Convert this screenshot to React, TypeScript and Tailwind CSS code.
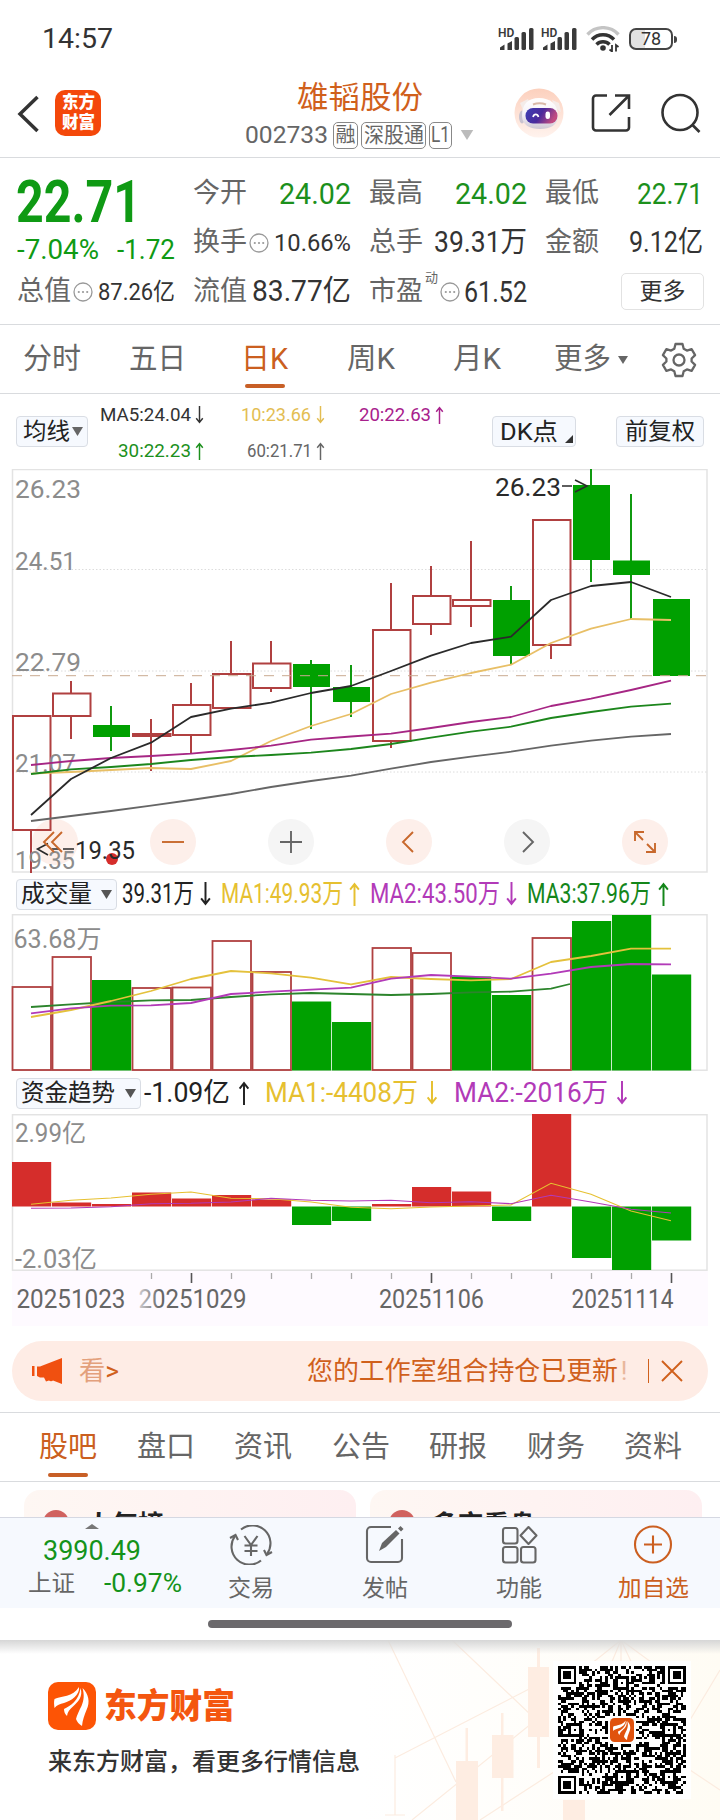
import React, { useLayoutEffect, useRef } from 'react';
import clsx from 'clsx';

const RED = '#b04040';
const SOLID_RED = '#d52d2b';
const GREEN = '#00a000';
const GOLD = '#e6c030';
const PURPLE = '#b23ab8';

interface FitProps {
  w: number;
  className?: string;
  children: React.ReactNode;
}

// Squeezes a single line of text into a fixed width
const Fit: React.FC<FitProps> = ({ w, className, children }) => {
  const ref = useRef<HTMLSpanElement>(null);

  useLayoutEffect(() => {
    const el = ref.current;
    if (!el) return;
    el.style.transform = 'none';
    el.style.transform = `scaleX(${w / el.getBoundingClientRect().width})`;
  }, [w, children]);

  return (
    <span className={clsx('block shrink-0 whitespace-nowrap leading-none', className)} style={{ width: w }}>
      <span ref={ref} className="inline-block origin-left leading-none">{children}</span>
    </span>
  );
};

const Arrow: React.FC<{ up?: boolean; className?: string }> = ({ up, className }) => (
  <svg viewBox="0 0 10 22" fill="none" stroke="currentColor" strokeWidth="1.8" className={clsx('shrink-0', className)}>
    {up ? <path d="M5 22V2M1 7l4-5 4 5" /> : <path d="M5 0v20M1 15l4 5 4-5" />}
  </svg>
);

const Caret: React.FC<{ className?: string }> = ({ className }) => (
  <svg viewBox="0 0 10 8" className={clsx('shrink-0', className)}>
    <path d="M0 0h10L5 8z" fill="currentColor" />
  </svg>
);

const More: React.FC<{ className?: string }> = ({ className }) => (
  <svg viewBox="0 0 20 20" className={clsx('h-5 w-5 shrink-0 text-[#999]', className)}>
    <circle cx="10" cy="10" r="9" fill="none" stroke="currentColor" strokeWidth="1.3" />
    <circle cx="5.8" cy="10" r="1.1" fill="currentColor" />
    <circle cx="10" cy="10" r="1.1" fill="currentColor" />
    <circle cx="14.2" cy="10" r="1.1" fill="currentColor" />
  </svg>
);

const Signal = () => (
  <div className="relative h-[24px] w-[36px]">
    <svg viewBox="0 0 36 24" className="h-full w-full" fill="#3a3a3a">
      <path d="M1 23v-2.500l4.500-3V23zM8.500 23v-6.500l4.500-2.500v9z" />
      <rect x="15.500" y="10" width="4.500" height="13" rx="1.500" />
      <rect x="22.500" y="5" width="4.500" height="18" rx="1.500" />
      <rect x="30" y="1" width="4.500" height="22" rx="1.500" />
    </svg>
    <span className="absolute -left-px top-0 text-[12px] font-semibold leading-none text-[#3a3a3a]">HD</span>
  </div>
);

const StatusBar = () => (
  <div className="flex h-[70px] items-center pl-[42px] pr-[43px] pt-2 text-[#333]">
    <Fit w={71} className="text-[28px]">14:57</Fit>
    <div className="ml-auto flex items-center">
      <Signal />
      <div className="ml-[7px]"><Signal /></div>
      <svg viewBox="0 0 34 26" className="ml-[8px] h-[26px] w-[34px]" fill="none" strokeWidth="3.400">
        <path d="M1.500 8.500a21 21 0 0 1 31 0" stroke="#c4c4c4" />
        <path d="M6 13.500a15 15 0 0 1 22 0" stroke="#333" />
        <path d="M10.500 18.500a9 9 0 0 1 13 0" stroke="#333" />
        <circle cx="17" cy="22" r="2.800" fill="#333" />
        <path d="M26 19v6.500l-2.500-2M30 25.500v-6.500l2.500 2" stroke="#333" strokeWidth="1.800" />
      </svg>
      <div className="ml-[9px] flex h-[22px] w-[44px] items-center justify-center rounded-[7px] border-2 border-[#444] bg-linear-to-r from-[#e2e2e2] from-35% to-white to-35% text-[18px] leading-none">
        78
      </div>
      <div className="ml-[1px] h-[7px] w-[3px] rounded-r bg-[#444]" />
    </div>
  </div>
);

const Robot = () => (
  <svg viewBox="0 0 50 50" className="h-[50px] w-[50px]">
    <defs>
      <linearGradient id="halo" x1="0" y1="0" x2="0" y2="1">
        <stop offset="0" stopColor="#fcd0bd" />
        <stop offset="1" stopColor="#fff3ee" />
      </linearGradient>
      <linearGradient id="visor" x1="0" y1="0" x2="1" y2="0.300">
        <stop offset="0" stopColor="#3d3fb4" />
        <stop offset="0.550" stopColor="#4a2a9c" />
        <stop offset="1" stopColor="#c04a80" />
      </linearGradient>
      <linearGradient id="shell" x1="0" y1="0" x2="0" y2="1">
        <stop offset="0" stopColor="#ffffff" />
        <stop offset="0.500" stopColor="#f6f3f8" />
        <stop offset="1" stopColor="#cfc8d4" />
      </linearGradient>
    </defs>
    <circle cx="25" cy="25" r="24.500" fill="url(#halo)" />
    <path d="M6 15l8-4 2 6-7 5zM38 12l7 3 2 9-6-4z" fill="#f4ece9" />
    <ellipse cx="8" cy="29" rx="3" ry="6.500" fill="#c9c3d0" />
    <path d="M8 28C8 16 14 10 25 10s19 6 19 18c0 9-8 13-18 13S8 37 8 28z" fill="url(#shell)" />
    <path d="M19 16.500c4-1.500 9-1.500 13 0" stroke="#d9b9a8" strokeWidth="2" fill="none" />
    <rect x="11.500" y="20" width="32" height="15.500" rx="7.500" fill="url(#visor)" />
    <path d="M19 29c1-3.500 4.500-3.500 5.500 0" stroke="#fff" strokeWidth="1.700" fill="none" />
    <rect x="31.500" y="23.500" width="4.500" height="7.500" rx="2.200" fill="#fff" />
  </svg>
);

const Header = () => (
  <div className="flex h-[88px] items-center border-b border-[#d9dbde]">
    <svg viewBox="0 0 22 38" className="ml-[17px] h-[38px] w-[22px]" fill="none" stroke="#333" strokeWidth="3.500">
      <path d="M20.500 2L3 19l17.500 17" />
    </svg>
    <div className="mb-[2px] ml-[16px] flex h-[46px] w-[46px] flex-col items-center justify-center gap-[3px] rounded-[10px] bg-[#f4480a] font-black text-white">
      <Fit w={33} className="text-[17px]">东方</Fit>
      <Fit w={33} className="text-[17px]">财富</Fit>
    </div>
    <div className="ml-[144px] mt-[4px] w-[229px]">
      <Fit w={126} className="ml-[52px] text-[31px] text-[#d0601c]">雄韬股份</Fit>
      <div className="mt-[8px] flex h-7 items-center text-[#666]">
        <Fit w={83} className="text-[24px]">002733</Fit>
        <span className="ml-[5px] flex h-[27px] w-[25px] items-center justify-center rounded-[5px] border border-[#888]"><Fit w={20} className="text-[20px]">融</Fit></span>
        <span className="ml-[3px] flex h-[27px] w-[65px] items-center justify-center rounded-[5px] border border-[#888]"><Fit w={60} className="text-[21px]">深股通</Fit></span>
        <span className="ml-[3px] flex h-[27px] w-[23px] items-center justify-center rounded-[5px] border border-[#888]"><Fit w={19} className="text-[22px]">L1</Fit></span>
        <Caret className="ml-[8px] h-[10px] w-[14px] text-[#bbb]" />
      </div>
    </div>
    <div className="mb-[2px] ml-[40px]"><Robot /></div>
    <svg viewBox="0 0 40 40" className="mb-[2px] ml-[27px] h-10 w-10" fill="none" stroke="#333" strokeWidth="2.600">
      <path d="M16 2.500H5a3 3 0 0 0-3 3v29a3 3 0 0 0 3 3h30a3 3 0 0 0 3-3V24M24 2.500h14V16M38 2.500L18.500 22" />
    </svg>
    <svg viewBox="0 0 40 40" className="mb-[2px] ml-[30px] h-10 w-10" fill="none" stroke="#333" strokeWidth="2.600">
      <circle cx="19" cy="19.500" r="17.500" />
      <path d="M31 31.500l7.500 7.500" />
    </svg>
  </div>
);

interface CellProps {
  label: string;
  value: string;
  w: number;
  more?: boolean;
  mark?: string;
  color?: string;
  size?: string;
}

const Cell: React.FC<CellProps> = ({ label, value, w, more, mark, color = 'text-[#333]', size = 'text-[30px]' }) => (
  <div className="flex h-[49px] items-center">
    <Fit w={54} className="text-[27px] text-[#666]">{label}</Fit>
    {mark && <span className="mb-7 ml-[2px] text-[13px] leading-none text-[#666]">{mark}</span>}
    {more && <More className="ml-[2px]" />}
    <Fit w={w} className={clsx('ml-auto', color, size)}>{value}</Fit>
  </div>
);

const Quote = () => (
  <div className="grid h-[167px] grid-cols-4 gap-x-[18px] border-b border-[#d9dbde] px-[17px] pt-[11px]">
    <div className="text-[#0f9a14]">
      <div className="flex h-[64px] items-center">
        <Fit w={125} className="-ml-px text-[59px] font-bold">22.71</Fit>
      </div>
      <div className="flex h-[34px] items-center justify-between">
        <Fit w={82} className="text-[27px]">-7.04%</Fit>
        <Fit w={58} className="text-[27px]">-1.72</Fit>
      </div>
      <Cell label="总值" value="87.26亿" w={77} more size="text-[24px]" />
    </div>
    <div>
      <Cell label="今开" value="24.02" w={72} color="text-[#1c901c]" />
      <Cell label="换手" value="10.66%" w={77} more size="text-[24px]" />
      <Cell label="流值" value="83.77亿" w={99} size="text-[29px]" />
    </div>
    <div>
      <Cell label="最高" value="24.02" w={72} color="text-[#1c901c]" />
      <Cell label="总手" value="39.31万" w={93} size="text-[29px]" />
      <Cell label="市盈" value="61.52" w={63} mark="动" more />
    </div>
    <div>
      <Cell label="最低" value="22.71" w={66} color="text-[#1c901c]" />
      <Cell label="金额" value="9.12亿" w={74} size="text-[29px]" />
      <button className="-mr-px ml-auto mt-[6px] flex h-[37px] w-[83px] items-center justify-center rounded-[5px] border border-[#e2e2e2] text-[#333]">
        <Fit w={46} className="text-[23px]">更多</Fit>
      </button>
    </div>
  </div>
);

const PeriodTabs = () => (
  <div className="flex h-[69px] items-center border-b border-[#d9dbde] pl-[23px] pt-px text-[29px] text-[#666]">
    <Fit w={58}>分时</Fit>
    <Fit w={57} className="ml-[48px]">五日</Fit>
    <div className="relative ml-[55px] text-[#cb5f20]">
      <Fit w={47}>日K</Fit>
      <div className="absolute -bottom-[14px] left-[4px] h-1 w-10 rounded-full bg-[#c85f26]" />
    </div>
    <Fit w={48} className="ml-[59px]">周K</Fit>
    <Fit w={48} className="ml-[58px]">月K</Fit>
    <Fit w={57} className="ml-[53px]">更多</Fit>
    <Caret className="ml-[7px] h-[8px] w-[10px]" />
    <svg viewBox="0 0 36 36" className="ml-[33px] h-[36px] w-[36px]" fill="none" stroke="#666" strokeWidth="2.300" strokeLinejoin="round">
      <path d="M14.500 2h7l1.200 4.700 3.200 1.900 4.700-1.400 3.500 6-3.500 3.300v3l3.500 3.300-3.500 6-4.700-1.400-3.200 1.900L21.500 34h-7l-1.200-4.700-3.200-1.900-4.700 1.400-3.500-6 3.500-3.300v-3l-3.500-3.300 3.500-6 4.700 1.400 3.200-1.900z" />
      <circle cx="18" cy="18" r="5.500" />
    </svg>
  </div>
);

const pill = 'flex h-[31px] shrink-0 items-center rounded-[4px] border border-[#d9dde4] bg-[#f6f9fe] text-[#222]';

const MaRow = () => (
  <div className="flex h-[75px] items-center pl-[16px]">
    <div className={clsx(pill, 'w-[72px] pl-[6px]')}>
      <Fit w={47} className="text-[23px]">均线</Fit>
      <Caret className="ml-[2px] h-[9px] w-[11px] text-[#666]" />
    </div>
    <div className="ml-[12px] flex h-full w-[392px] flex-col text-[19px]">
      <div className="flex h-[41px] items-center">
        <div className="flex items-center text-[#333]"><Fit w={91}>MA5:24.04</Fit><Arrow className="ml-[3px] h-[18px] w-[11px]" /></div>
        <div className="ml-[36px] flex items-center text-[#e3bd52]"><Fit w={70}>10:23.66</Fit><Arrow className="ml-[4px] h-[18px] w-[11px]" /></div>
        <div className="ml-[33px] flex items-center text-[#a8218c]"><Fit w={72}>20:22.63</Fit><Arrow up className="ml-[3px] h-[18px] w-[11px]" /></div>
      </div>
      <div className="flex h-[31px] items-center pl-[18px]">
        <div className="flex items-center text-[#1c901c]"><Fit w={73}>30:22.23</Fit><Arrow up className="ml-[3px] h-[18px] w-[11px]" /></div>
        <div className="ml-[42px] flex items-center text-[#666]"><Fit w={65}>60:21.71</Fit><Arrow up className="ml-[3px] h-[18px] w-[11px]" /></div>
      </div>
    </div>
    <div className={clsx(pill, 'w-[84px] pl-[7px]')}>
      <Fit w={58} className="text-[24px]">DK点</Fit>
      <svg viewBox="0 0 8 8" className="ml-[7px] mt-[15px] h-2 w-2"><path d="M8 0v8H0z" fill="#333" /></svg>
    </div>
    <div className={clsx(pill, 'ml-[40px] w-[88px] justify-center')}>
      <Fit w={70} className="text-[23px]">前复权</Fit>
    </div>
  </div>
);

// x of the middle of the i-th trading day
const cx = (i: number) => 31 + i * 40;

const points = (ys: number[]) => ys.map((y, i) => `${cx(i)},${y}`).join(' ');

// [high, body top, body bottom, low, rising]
const candles: [number, number, number, number, boolean][] = [
  [716, 716, 830, 873, true],
  [681, 693.5, 716, 739, true],
  [706, 725, 737, 751, false],
  [719, 734, 736, 771, true],
  [683, 705, 735, 753, true],
  [641, 674, 708, 708, true],
  [641, 663.5, 688, 692, true],
  [660, 664, 687, 729, false],
  [665, 687, 702, 717, false],
  [583, 630, 741, 748, true],
  [566, 596, 624, 635, true],
  [541, 600, 606, 627, true],
  [586, 600, 656, 664, false],
  [520, 520, 645, 659, true],
  [469, 485, 560, 582, false],
  [494, 560.5, 575, 619, false],
  [599, 599, 676, 676, false],
];

const ma5 = [815, 779, 758, 742.7, 717, 708.7, 702.7, 693, 686, 671, 655.7, 643, 636.7, 600, 586, 582, 597];
const ma10 = [773.7, 772, 770, 768, 769, 761, 741, 726, 714, 694, 682.7, 673, 664.7, 643, 628.7, 619, 620];
const ma20 = [765, 761, 758, 756, 753.7, 750, 745.7, 739.7, 736.5, 733.7, 728, 722, 717, 706, 698.7, 690, 680.7];
const ma30 = [774, 769.3, 767, 764, 760, 757, 755, 752.7, 749, 744, 737.7, 731.7, 726.7, 718, 712, 706.7, 703.7];
const ma60 = [821, 816, 811, 805.7, 800, 794, 787, 781, 775.7, 768.7, 762, 756.7, 751.7, 745.7, 740.7, 736.7, 734];

const priceLabels: [string, number, number][] = [
  ['26.23', 498, 66],
  ['24.51', 569.5, 61],
  ['22.79', 670.5, 66],
  ['21.07', 771.5, 61],
  ['19.35', 868.5, 60],
];

const peach = 'bg-[#fdefea]';
const gray = 'bg-[#f5f5f5]';

const chartButtons = [
  { bg: peach, d: 'M-1 -10L-11 0l10 10M7 -10L-3 0l10 10' },
  { bg: peach, d: 'M-11 0h22' },
  { bg: gray, d: 'M-11 0h22M0 -11v22' },
  { bg: peach, d: 'M4 -10L-6 0l10 10' },
  { bg: gray, d: 'M-4 -10L6 0l-10 10' },
  { bg: peach, d: 'M-10 -1v-9h9M-10 -10l8 8M10 1v9h-9M10 10l-8 -8' },
];

const PriceChart = () => (
  <div className="relative h-[405px]">
    <svg viewBox="0 469 720 405" className="absolute inset-0 h-full w-full" fill="none">
      <rect x="12.5" y="469.5" width="694.5" height="402.5" stroke="#e3e3e3" strokeWidth="1.5" />
      {[569.5, 671, 772].map((y) => (
        <path key={y} d={`M12 ${y}H707`} stroke="#dcdcdc" strokeDasharray="1.5 2" />
      ))}
    </svg>
    <div className="absolute left-[32px] top-[350px] flex gap-[72px]">
      {chartButtons.map((b) => (
        <div key={b.d} className={clsx('h-[46px] w-[46px] rounded-full', b.bg)} />
      ))}
    </div>
    <svg viewBox="0 469 720 405" className="absolute inset-0 h-full w-full" fill="none">
      {candles.map(([high, top, bottom, low, rising], i) => {
        const c = cx(i);
        return rising ? (
          <g key={i} stroke={RED} strokeWidth="2">
            <path d={`M${c} ${high}V${top}M${c} ${bottom}V${low}`} />
            <rect x={c - 18} y={top} width="37.5" height={bottom - top} />
          </g>
        ) : (
          <g key={i}>
            <path d={`M${c} ${high}V${low}`} stroke="#109a10" strokeWidth="2" />
            <rect x={c - 18} y={top} width="37" height={bottom - top} fill={GREEN} />
          </g>
        );
      })}
      <path d="M12 675.7H707" stroke="#c9ab90" strokeDasharray="10 8" />
      <g fill="#8c8c8c" fontSize="26.5">
        {priceLabels.map(([label, y, w]) => (
          <text key={label} x="15" y={y} textLength={w} lengthAdjust="spacingAndGlyphs">{label}</text>
        ))}
      </g>
      <g strokeWidth="1.8" strokeLinejoin="round">
        <polyline points={points(ma60)} stroke="#666" />
        <polyline points={points(ma10)} stroke="#e8bf66" />
        <polyline points={points(ma30)} stroke="#1c861c" />
        <polyline points={points(ma20)} stroke="#a62684" />
        <polyline points={points(ma5)} stroke="#2a2a2a" />
      </g>
      <circle cx="112" cy="859" r="6" fill="#d52d2b" />
      <g fill="#2a2a2a" fontSize="26.5">
        <text x="75" y="858.5" textLength="60" lengthAdjust="spacingAndGlyphs">19.35</text>
        <text x="495" y="495.5" textLength="66" lengthAdjust="spacingAndGlyphs">26.23</text>
      </g>
      <path d="M48 843.5l-10.500 5.500L48 855M52 849h7M63 849h11M562 486h10M575 480l12 6-12 6" stroke="#2a2a2a" strokeWidth="1.600" />
    </svg>
    <div className="absolute left-[32px] top-[350px] flex gap-[72px]">
      {chartButtons.map((b) => (
        <svg
          key={b.d}
          viewBox="-23 -23 46 46"
          className={clsx('h-[46px] w-[46px]', b.bg === peach ? 'text-[#c8682c]' : 'text-[#666]')}
          fill="none"
          stroke="currentColor"
          strokeWidth="1.9"
        >
          <path d={b.d} />
        </svg>
      ))}
    </div>
  </div>
);

const VolumeHeader = () => (
  <div className="flex h-[40px] items-center pl-[16px] text-[27px]">
    <div className={clsx(pill, 'w-[101px] pl-[4px]')}>
      <Fit w={71} className="text-[24px]">成交量</Fit>
      <Caret className="ml-[9px] h-[9px] w-[11px] text-[#555]" />
    </div>
    <Fit w={72} className="ml-[5px] text-[#222]">39.31万</Fit>
    <Arrow className="ml-[5px] h-[24px] w-[13px] text-[#222]" />
    <Fit w={122} className="ml-[9px] text-[#e6c030]">MA1:49.93万</Fit>
    <Arrow up className="ml-[5px] h-[24px] w-[13px] text-[#e6c030]" />
    <Fit w={130} className="ml-[9px] text-[#b23ab8]">MA2:43.50万</Fit>
    <Arrow className="ml-[5px] h-[24px] w-[13px] text-[#b23ab8]" />
    <Fit w={124} className="ml-[9px] text-[#14861a]">MA3:37.96万</Fit>
    <Arrow up className="ml-[6px] h-[24px] w-[13px] text-[#14861a]" />
  </div>
);

const volumes: [number, boolean][] = [
  [987, true], [957, true], [980, false], [988, true], [987.5, true], [941, true],
  [972, true], [1001.5, false], [1022, false], [948, true], [953, true], [976.5, false],
  [995, false], [938, true], [921, false], [915, false], [974.5, false],
];
const volMa1 = [1017, 1010, 1001, 991, 979, 971, 973.3, 977.7, 984.3, 977, 979, 980.3, 979, 962, 956, 948.7, 948.7];
const volMa2 = [1013.3, 1008.3, 1005.7, 1005.3, 1003, 994, 991.7, 989.7, 987.7, 978.7, 975, 976.7, 978.7, 973.7, 967, 964, 964.3];
const volMa3 = [1007, 1004.3, 1002, 1000.3, 1000, 997, 994.3, 993, 994, 995, 994, 992.3, 991.7, 988.7];

const VolumeChart = () => (
  <svg viewBox="0 914 720 157" className="block h-[157px] w-full" fill="none">
    <rect x="12.5" y="914.7" width="694.5" height="155.5" stroke="#e3e3e3" strokeWidth="1.5" />
    <text x="13.5" y="948" fill="#8c8c8c" fontSize="25" textLength="88" lengthAdjust="spacingAndGlyphs">63.68万</text>
    {volumes.map(([top, rising], i) => (
      rising
        ? <rect key={i} x={cx(i) - 18.5} y={top} width="38.5" height={1070 - top} stroke={RED} strokeWidth="1.8" />
        : <rect key={i} x={cx(i) - 19} y={top} width="39.2" height={1070.5 - top} fill={GREEN} />
    ))}
    <g strokeWidth="1.8" strokeLinejoin="round">
      <polyline points={`${points(volMa3)} 570,984`} stroke="#2c842c" />
      <polyline points={points(volMa1)} stroke="#e4c13c" />
      <polyline points={points(volMa2)} stroke={PURPLE} />
    </g>
  </svg>
);

const FundHeader = () => (
  <div className="flex h-[43px] items-center pl-[16px] pt-px text-[27px]">
    <div className={clsx(pill, 'w-[125px] pl-[4px]')}>
      <Fit w={94} className="text-[24px]">资金趋势</Fit>
      <Caret className="ml-[10px] h-[9px] w-[11px] text-[#555]" />
    </div>
    <Fit w={86} className="ml-[3px] text-[#222]">-1.09亿</Fit>
    <Arrow up className="ml-[7px] h-[24px] w-[14px] text-[#222]" />
    <Fit w={153} className="ml-[14px] text-[#e6c030]">MA1:-4408万</Fit>
    <Arrow className="ml-[7px] h-[24px] w-[14px] text-[#e6c030]" />
    <Fit w={154} className="ml-[15px] text-[#b23ab8]">MA2:-2016万</Fit>
    <Arrow className="ml-[7px] h-[24px] w-[14px] text-[#b23ab8]" />
  </div>
);

const ZERO = 1206.5;
const flows = [1162, 1202.5, 1204, 1192.5, 1198.5, 1195, 1199.5, 1225, 1221, 1204, 1187, 1191.5, 1221, 1114, 1258, 1270, 1240.5];
const flowMa1 = [1204.3, 1200.3, 1198, 1194.3, 1192, 1198.3, 1198.7, 1202, 1207.3, 1208.7, 1207, 1206, 1205, 1183.3, 1194.3, 1211, 1220.7];
const flowMa2 = [1208.3, 1208, 1206.7, 1203.7, 1203.3, 1202, 1198.3, 1200.3, 1201, 1200.3, 1202.7, 1201.7, 1203.7, 1195.3, 1202, 1209.3, 1213];

const dates: [string, number, number][] = [
  ['20251023', 16.5, 109],
  ['20251029', 138.5, 108],
  ['20251106', 379, 105],
  ['20251114', 571.5, 102],
];

const FundChart = () => (
  <svg viewBox="0 1114 720 212" className="block h-[212px] w-full" fill="none">
    <defs>
      <linearGradient id="fade" gradientUnits="userSpaceOnUse" x1="138" y1="0" x2="160" y2="0">
        <stop offset="0" stopColor="#d4d0d4" />
        <stop offset="1" stopColor="#666" />
      </linearGradient>
    </defs>
    <rect x="12" y="1271" width="696" height="55" fill="#fefaff" />
    <rect x="12.5" y="1114.7" width="694.5" height="155.5" stroke="#e3e3e3" strokeWidth="1.5" />
    {flows.map((y, i) => (
      <rect key={i} x={cx(i) - 19} y={Math.min(y, ZERO)} width="39.2" height={Math.abs(y - ZERO)} fill={y < ZERO ? SOLID_RED : GREEN} />
    ))}
    <g fill="#8c8c8c" fontSize="25">
      <text x="15" y="1142" textLength="71" lengthAdjust="spacingAndGlyphs">2.99亿</text>
      <text x="15" y="1268" textLength="82" lengthAdjust="spacingAndGlyphs">-2.03亿</text>
    </g>
    <polyline points={points(flowMa1)} stroke={GOLD} strokeWidth="1.1" />
    <polyline points={points(flowMa2)} stroke={PURPLE} strokeWidth="1.1" />
    {flows.map((_, i) => {
      const major = (i - 4) % 6 === 0;
      return i > 2 && (
        <path key={i} d={`M${cx(i) + 0.5} 1273v${major ? 10 : 6}`} stroke={major ? '#555' : '#aaa'} strokeWidth={major ? 1.6 : 1.3} />
      );
    })}
    {dates.map(([d, x, w], i) => (
      <text key={d} x={x} y="1308" fontSize="25" fill={i === 1 ? 'url(#fade)' : '#666'} textLength={w} lengthAdjust="spacingAndGlyphs">{d}</text>
    ))}
  </svg>
);

const Notice = () => (
  <div className="mx-[12px] mt-[15px] flex h-[60px] items-center rounded-full bg-[#feece5] text-[26px] text-[#d0601c]">
    <svg viewBox="0 0 30 26" className="ml-[20px] h-[26px] w-[30px]" fill="#f05010">
      <path d="M0 8h2.500v10H0zM5 8.500h3L30 0v26l-9-3.500c-1 1-3 1-4 0l-3 1-2-4H8l-3-1.500z" />
    </svg>
    <Fit w={40} className="ml-[17px]"><span className="text-[#e3a07c]">看</span>&gt;</Fit>
    <Fit w={311} className="ml-[188px]">您的工作室组合持仓已更新</Fit>
    <span className="w-[12px] text-center leading-none text-[#e9b79c]">!</span>
    <div className="ml-[18px] h-6 w-px bg-[#d0601c]" />
    <svg viewBox="0 0 22 22" className="ml-[12px] h-[22px] w-[22px]" stroke="#d0601c" strokeWidth="1.9">
      <path d="M1 1l20 20M21 1L1 21" />
    </svg>
  </div>
);

const infoTabs = ['股吧', '盘口', '资讯', '公告', '研报', '财务', '资料'];

const InfoTabs = () => (
  <div className="mt-[11px] flex h-[70px] items-center justify-between border-y border-[#d9dbde] pl-[39px] pr-[38px]">
    {infoTabs.map((tab, i) => (
      <div key={tab} className={clsx('relative', i === 0 ? 'text-[#cb5f20]' : 'text-[#666]')}>
        <Fit w={58} className="text-[29px]">{tab}</Fit>
        {i === 0 && <div className="absolute -bottom-[15px] left-[9px] h-1 w-10 rounded-full bg-[#c85f26]" />}
      </div>
    ))}
  </div>
);

const Cards = () => (
  <div className="flex h-[35px] gap-[14px] overflow-hidden px-[24px] pt-[8px]">
    {[{ title: '人气榜', w: 78 }, { title: '多空看盘', w: 103 }].map((card) => (
      <div key={card.title} className="flex h-[90px] w-[332px] shrink-0 items-start rounded-t-2xl bg-linear-to-r from-[#fef7f3] to-[#feeff1] pl-[19px] pt-[20px]">
        <div className="h-[26px] w-[26px] shrink-0 rounded-full bg-[#d0625f]" />
        <Fit w={card.w} className="ml-[17px] mt-[2px] text-[26px] font-bold text-[#222]">{card.title}</Fit>
      </div>
    ))}
  </div>
);

const BottomNav = () => (
  <div className="flex h-[91px] border-t border-[#d5d8e2] bg-[#f6f9fe] text-[#666]">
    <div className="w-[199px] pl-[28px] pt-[6px]">
      <svg viewBox="0 0 14 5" className="ml-[57px] h-[5px] w-[14px]"><path d="M0 5l7-5 7 5z" fill="#777" /></svg>
      <Fit w={98} className="ml-[15px] mt-[8px] text-[28px] text-[#14931a]">3990.49</Fit>
      <div className="mt-[6px] flex items-center">
        <Fit w={47} className="text-[23px]">上证</Fit>
        <Fit w={78} className="ml-[29px] text-[25px] text-[#14931a]">-0.97%</Fit>
      </div>
    </div>
    <div className="flex w-[104px] flex-col items-center pt-[7px]">
      <svg viewBox="0 0 44 40" className="h-[40px] w-[44px]" fill="none" stroke="#666" strokeWidth="2.100">
        <path d="M12 4.500A18 18 0 0 1 38 29M32 35.500A18 18 0 0 1 6 11" />
        <path d="M1 13l5.500-3L9 15M43 27l-5.500 3-2.500-5" />
        <path d="M15.500 11l6.500 9 6.500-9M22 20v11M15.500 20.500h13M15.500 26h13" />
      </svg>
      <Fit w={46} className="mt-[12px] text-[23px]">交易</Fit>
    </div>
    <div className="ml-[30px] flex w-[104px] flex-col items-center pt-[7px]">
      <svg viewBox="0 0 40 40" className="h-[40px] w-[40px]" fill="none" stroke="#666" strokeWidth="2.100">
        <path d="M26 2H6a4 4 0 0 0-4 4v27a4 4 0 0 0 4 4h27a4 4 0 0 0 4-4V14" />
        <path d="M14 26l3-8L31 5l3.500 3.500L21 22z" fill="#666" stroke="none" />
        <path d="M33 3.500l2.500-2.500 3 3-2.500 2.500z" fill="#666" stroke="none" />
      </svg>
      <Fit w={46} className="mt-[12px] text-[23px]">发帖</Fit>
    </div>
    <div className="ml-[30px] flex w-[104px] flex-col items-center pt-[7px]">
      <svg viewBox="0 0 38 40" className="h-[40px] w-[38px]" fill="none" stroke="#666" strokeWidth="2.100">
        <rect x="3" y="3" width="14.500" height="15.500" rx="2.500" />
        <rect x="3" y="22" width="14.500" height="15.500" rx="2.500" />
        <rect x="21" y="22" width="14.500" height="15.500" rx="2.500" />
        <path d="M28.500 2l8 8.500-8 8.500-8-8.500z" strokeLinejoin="round" />
      </svg>
      <Fit w={46} className="mt-[12px] text-[23px]">功能</Fit>
    </div>
    <div className="ml-[30px] flex w-[104px] flex-col items-center pt-[7px] text-[#cb5f20]">
      <svg viewBox="0 0 40 40" className="h-[40px] w-[40px]" fill="none" stroke="currentColor" strokeWidth="2.100">
        <circle cx="20" cy="19.500" r="18" />
        <path d="M11 19.500h18M20 10.500v18" />
      </svg>
      <Fit w={71} className="mt-[12px] text-[23px]">加自选</Fit>
    </div>
  </div>
);

const Feathers = () => (
  <g fill="#fff">
    <path d="M6.500 17C13 14 25 15 31 5c1 8-8 14-15 16-4 1-7 2-9.500 5-.500-4-.700-6 0-9z" />
    <path d="M32.500 6c3 9-3 14-7 18-4 3.500-6 6-6.500 10-2-2-3-4-3-7 6-3 15-8 16.500-21z" />
    <path d="M34.500 6c6 6 8 14 4 22-2 5-4 10-4.500 16-3-2-5-4-6-7 1-4 3-8 5.500-13 2.500-6 3-11 1-18z" />
  </g>
);

const QR_SIZE = 49;

// Solid finder squares in three corners, alignment marks and pseudo-random data elsewhere
const qrPath = (() => {
  let seed = 20251114;
  const rand = () => {
    seed = (seed * 1103515245 + 12345) % 2147483648;
    return seed / 2147483648;
  };
  const ring = (x: number, y: number, mx: number, my: number, r: number) => {
    const d = Math.max(Math.abs(x - mx), Math.abs(y - my));
    return d > r ? null : r === 4 ? d !== 2 && d !== 4 : d !== 1;
  };
  let d = '';
  for (let y = 0; y < QR_SIZE; y++) {
    for (let x = 0; x < QR_SIZE; x++) {
      const fixed = ring(x, y, 3, 3, 4) ?? ring(x, y, 45, 3, 4) ?? ring(x, y, 3, 45, 4) ??
        ring(x, y, 42, 42, 2) ?? ring(x, y, 24, 6, 2) ?? ring(x, y, 6, 24, 2) ?? ring(x, y, 42, 24, 2) ?? ring(x, y, 24, 42, 2);
      const noise = rand() > 0.49;
      if (Math.abs(x - 24) < 6 && Math.abs(y - 24) < 6) continue;
      if (fixed ?? noise) d += `M${x} ${y}h1v1h-1z`;
    }
  }
  return d;
})();

const Footer = () => (
  <div className="relative flex h-[180px] overflow-hidden bg-white">
    <svg viewBox="0 1640 720 180" className="absolute inset-0 h-full w-full" fill="none">
      <defs>
        <linearGradient id="glow" x1="0" y1="0" x2="1" y2="0">
          <stop offset="0.5" stopColor="#fffcf6" stopOpacity="0" />
          <stop offset="1" stopColor="#fffcf4" />
        </linearGradient>
      </defs>
      <rect y="1640" width="720" height="180" fill="url(#glow)" />
      <g stroke="#fcece0" strokeWidth="1.2">
        <path d="M388 1640l68 142M452 1640l80 76M395 1758l140-72M412 1820l130-105M480 1820l80-52M395 1755v60M385 1815h20" />
        <path d="M621 1640l-50 40M621 1640l-25 60M621 1640l0 30M621 1640l28 60M621 1640l60 44M690 1720l30-50M690 1770l30 20" />
      </g>
      <g fill="#feede2">
        <path d="M456 1761h22v59h-22zM465.500 1728h2.500v34h-2.500zM492 1735h21.500v43H492zM501 1713h2.500v98H501zM528 1667h21v70h-21zM537 1648h3v120h-3z" />
        <path d="M563 1800h22v20h-22z" />
      </g>
    </svg>
    <div className="absolute inset-x-0 top-0 h-[14px] bg-linear-to-b from-[#d6d6d6] to-transparent" />
    <div className="relative pl-[48px] pt-[42px]">
      <div className="flex items-center">
        <svg viewBox="0 0 48 48" className="h-[48px] w-[48px]">
          <rect width="48" height="48" rx="10" fill="#fd5405" />
          <Feathers />
        </svg>
        <Fit w={131} className="ml-[8px] text-[34px] font-black text-[#f4560f]">东方财富</Fit>
      </div>
      <Fit w={312} className="mt-[20px] text-[24px] font-medium text-[#333]">来东方财富，看更多行情信息</Fit>
    </div>
    <div className="relative ml-auto mr-[29px] mt-[21px] h-[138px] w-[138px] bg-white p-[5px]">
      <svg viewBox="0 0 49 49" className="h-[128px] w-[128px]" shapeRendering="crispEdges"><path d={qrPath} fill="#000" /></svg>
      <svg viewBox="0 0 48 48" className="absolute left-[57px] top-[57px] h-[24px] w-[24px]">
        <rect width="48" height="48" rx="9" fill="#e0520e" />
        <Feathers />
      </svg>
    </div>
  </div>
);

const App: React.FC = () => (
  <div className="h-[1820px] w-[720px] overflow-hidden bg-white font-[Roboto,'Noto_Sans_CJK_SC',sans-serif]">
    <StatusBar />
    <Header />
    <Quote />
    <PeriodTabs />
    <MaRow />
    <PriceChart />
    <VolumeHeader />
    <VolumeChart />
    <FundHeader />
    <FundChart />
    <Notice />
    <InfoTabs />
    <Cards />
    <BottomNav />
    <div className="flex h-[32px] justify-center pt-[12px]">
      <div className="h-[8px] w-[304px] rounded-full bg-[#6b696c]" />
    </div>
    <Footer />
  </div>
);

export default App;
